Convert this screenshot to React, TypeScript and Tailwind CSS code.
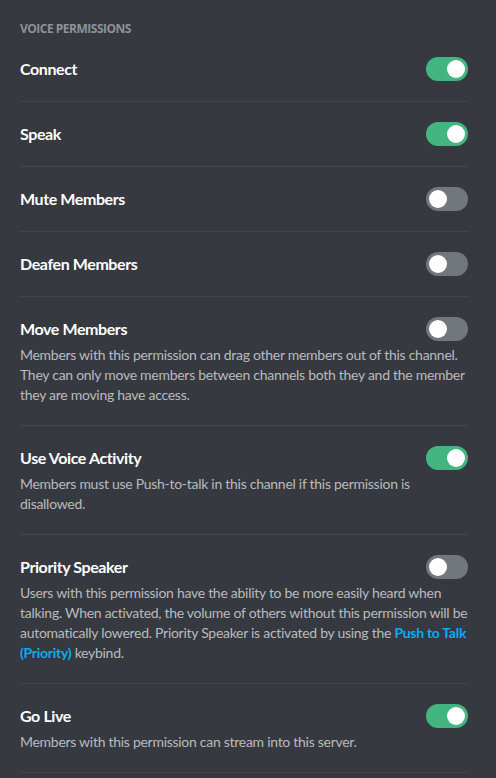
import React from "react";

type Perm = { title: string; on: boolean; desc?: React.ReactNode };

const perms: Perm[] = [
  { title: "Connect", on: true },
  { title: "Speak", on: true },
  { title: "Mute Members", on: false },
  { title: "Deafen Members", on: false },
  {
    title: "Move Members",
    on: false,
    desc: "Members with this permission can drag other members out of this channel. They can only move members between channels both they and the member they are moving have access.",
  },
  {
    title: "Use Voice Activity",
    on: true,
    desc: "Members must use Push-to-talk in this channel if this permission is disallowed.",
  },
  {
    title: "Priority Speaker",
    on: false,
    desc: (
      <>
        Users with this permission have the ability to be more easily heard when talking. When activated, the volume of
        others without this permission will be automatically lowered. Priority Speaker is activated by using the{" "}
        <span className="font-bold text-[#00b0f4]">Push to Talk (Priority)</span> keybind.
      </>
    ),
  },
  {
    title: "Go Live",
    on: true,
    desc: "Members with this permission can stream into this server.",
  },
];

function Toggle({ on }: { on: boolean }) {
  return (
    <div
      className={`relative h-6 w-[42px] shrink-0 rounded-full ${on ? "bg-[#43b581]" : "bg-[#72767d]"}`}
    >
      <div
        className={`absolute top-[3px] h-[18px] w-[18px] rounded-full bg-white ${on ? "right-[3px]" : "left-[3px]"}`}
      />
    </div>
  );
}

export default function App() {
  return (
    <div
      className="min-h-[778px] w-[496px] bg-[#36393f] pl-5 pr-7 pt-[21px]"
      style={{ fontFamily: 'Lato, "Noto Sans", sans-serif' }}
    >
      <div
        className="text-[12px] font-bold uppercase leading-4 tracking-[-0.5px] text-[#8e9297]"
        style={{ fontFamily: '"Open Sans", sans-serif' }}
      >
        Voice Permissions
      </div>
      {perms.map((p, i) => (
        <div key={p.title} className={`${i > 0 ? "border-t border-[#42454a]" : ""} py-5`}>
          <div className="flex h-6 items-center justify-between">
            <div className="text-[16px] font-bold tracking-[-0.4px] text-white">{p.title}</div>
            <Toggle on={p.on} />
          </div>
          {p.desc && (
            <div className="mt-1 text-[14px] leading-5 tracking-[-0.28px] text-[#b9bbbe]">{p.desc}</div>
          )}
        </div>
      ))}
      <div className="border-t border-[#42454a]" />
    </div>
  );
}
